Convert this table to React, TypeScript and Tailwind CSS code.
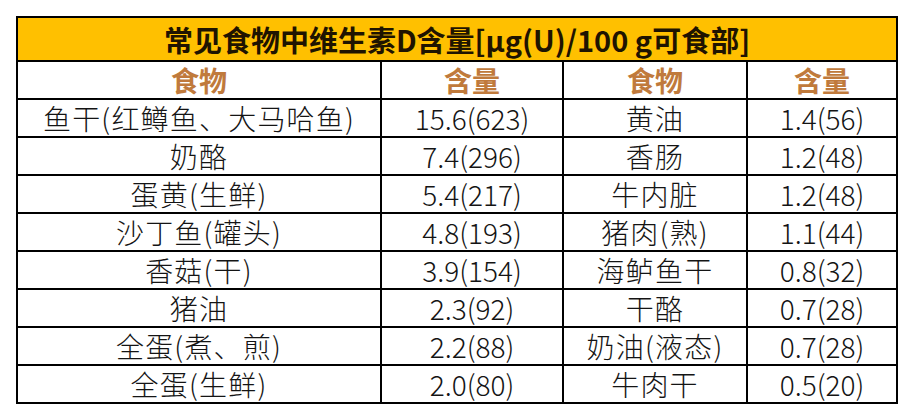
const rows: [string, string, string, string][] = [
  ["鱼干(红鳟鱼、大马哈鱼)", "15.6(623)", "黄油", "1.4(56)"],
  ["奶酪", "7.4(296)", "香肠", "1.2(48)"],
  ["蛋黄(生鲜)", "5.4(217)", "牛内脏", "1.2(48)"],
  ["沙丁鱼(罐头)", "4.8(193)", "猪肉(熟)", "1.1(44)"],
  ["香菇(干)", "3.9(154)", "海鲈鱼干", "0.8(32)"],
  ["猪油", "2.3(92)", "干酪", "0.7(28)"],
  ["全蛋(煮、煎)", "2.2(88)", "奶油(液态)", "0.7(28)"],
  ["全蛋(生鲜)", "2.0(80)", "牛肉干", "0.5(20)"],
];

const cell = "border-2 border-black text-center align-middle p-0";

export default function App() {
  return (
    <div
      className="w-[912px] h-[412px] bg-white pt-[16px] pl-[16px]"
      style={{ fontFamily: '"Noto Sans CJK SC", "Noto Sans", sans-serif' }}
    >
      <table className="border-collapse table-fixed w-[880px] text-[#141414]">
        <colgroup>
          <col className="w-[364px]" />
          <col className="w-[182px]" />
          <col className="w-[184px]" />
          <col className="w-[150px]" />
        </colgroup>
        <thead>
          <tr className="h-[44px]">
            <th
              colSpan={4}
              className={`${cell} bg-[#ffc000] text-[29px] font-bold leading-none text-[#1f1400]`}
            >
              常见食物中维生素D含量[μg(U)/100 g可食部]
            </th>
          </tr>
          <tr className="h-[38px]">
            {["食物", "含量", "食物", "含量"].map((h, i) => (
              <th key={i} className={`${cell} text-[28px] font-bold leading-none text-[#c07a3c]`}>
                {h}
              </th>
            ))}
          </tr>
        </thead>
        <tbody>
          {rows.map((r, i) => (
            <tr key={i} className="h-[38px]">
              {r.map((c, j) => (
                <td
                  key={j}
                  className={
                    j % 2 === 0
                      ? `${cell} text-[28px] font-light leading-none tracking-[1.2px]`
                      : `${cell} text-[28px] font-light leading-none`
                  }
                >
                  {c}
                </td>
              ))}
            </tr>
          ))}
        </tbody>
      </table>
    </div>
  );
}
